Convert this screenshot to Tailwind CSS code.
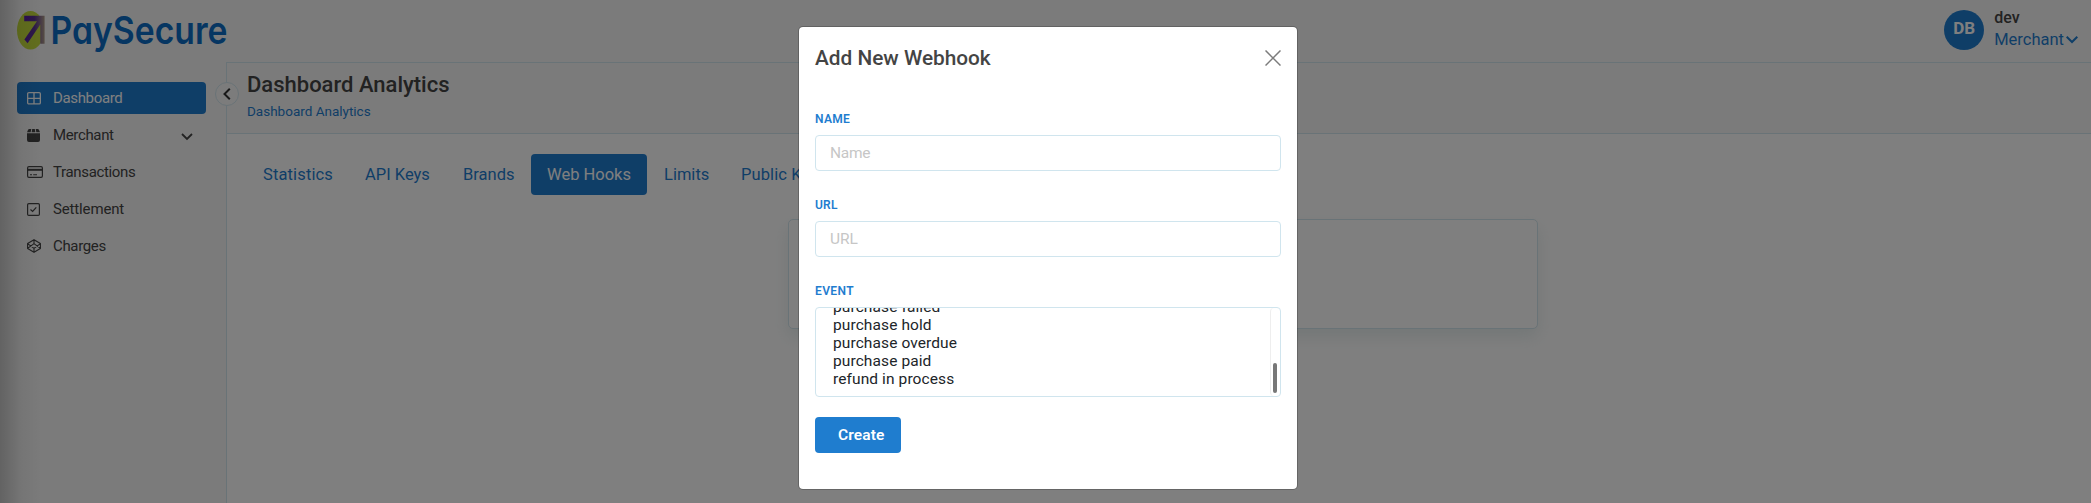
<!DOCTYPE html>
<html lang="en">
<head>
<meta charset="utf-8">
<title>PaySecure</title>
<script src="https://cdn.jsdelivr.net/npm/@tailwindcss/browser@4"></script>
</head>
<body class="relative w-full h-[503px] overflow-hidden bg-white font-['Roboto',sans-serif] text-[#444]">
<div class="flex flex-col h-[503px]">
  <header class="flex shrink-0 h-[62px] bg-[#f7f7f7] justify-between">
    <svg class="ml-[17px] mt-[4px] overflow-visible" width="220" height="54" viewBox="17 4 220 54">
      <defs>
        <linearGradient id="stem" gradientUnits="userSpaceOnUse" x1="24" y1="0" x2="45" y2="0"><stop offset="0" stop-color="#5a1ea8"/><stop offset=".5" stop-color="#5a3490"/><stop offset="1" stop-color="#b0a088"/></linearGradient>
      </defs>
      <ellipse cx="30.500" cy="30.300" rx="13.500" ry="19.300" fill="#c4dc3c"/>
      <path d="M24.200 15.800H44.600V43.800H40.300V24.500L27.600 43.300L24.400 39.600L37 21.300H24.200Z" fill="url(#stem)"/>
      <text class="[font-feature-settings:'cv11']" x="50.500" y="44.200" font-family="Inter, sans-serif" font-size="38.500" font-weight="600" fill="#0c6cc4" textLength="177" lengthAdjust="spacingAndGlyphs">PaySecure</text>
    </svg>
    <div class="flex items-start mr-[13px] pt-[10px] gap-[10px]">
      <div class="size-10 rounded-full bg-[#1f7dcf] text-white text-[17px] font-bold flex items-center justify-center pb-[2px]">DB</div>
      <div class="text-[16.5px] leading-[22px] -mt-[3px]">
        <div class="font-medium text-[16px]">dev</div>
        <div class="flex items-center text-[#1f7dcf]">Merchant<svg class="ml-[2px]" width="12" height="8" viewBox="0 0 12 8" fill="none" stroke="currentColor" stroke-width="2"><path d="M.7 .8 6 6 11.300 .8"/></svg></div>
      </div>
    </div>
  </header>
  <div class="flex flex-1">
    <aside class="w-[226px] shrink-0 bg-[#f7f7f7] pl-[17px] pr-[20px] pt-[20px] flex flex-col gap-[5px] text-[15px] tracking-[-0.35px]">
      <a class="flex items-center h-8 rounded bg-[#1f7dcf] text-white pl-[10px]">
        <span class="w-[26px]"><svg width="14" height="13" viewBox="0 0 14 13" fill="none" stroke="currentColor" stroke-width="1.300"><rect x=".65" y=".65" width="12.700" height="11.200" rx="1.200"/><path d="M7 .6V12M.6 6.300H13.400"/></svg></span>Dashboard</a>
      <a class="flex items-center h-8 pl-[10px]">
        <span class="w-[26px]"><svg width="13" height="13" viewBox="0 0 13 13" fill="currentColor"><path d="M2.200 0H4.300L3.700 3.300H0L1 .9Q1.400 0 2.200 0ZM5.200 0H7.800L8.400 3.300H4.600ZM8.700 0H10.800Q11.600 0 12 .9L13 3.300H9.300ZM0 4.200H13V11Q13 13 11 13H2Q0 13 0 11Z"/></svg></span>Merchant
        <svg class="ml-auto mr-[13px] mt-[3px]" width="12" height="8" viewBox="0 0 12 8" fill="none" stroke="currentColor" stroke-width="1.800"><path d="M1 1 6 6 11 1"/></svg></a>
      <a class="flex items-center h-8 pl-[10px]">
        <span class="w-[26px]"><svg width="16" height="12" viewBox="0 0 16 12" fill="none" stroke="currentColor"><rect x=".6" y=".6" width="14.800" height="10.800" rx="1.300" stroke-width="1.200"/><path d="M.6 3.800H15.400" stroke-width="2"/><path d="M3 8.700H5M6.200 8.700H10" stroke-width="1.100"/></svg></span>Transactions</a>
      <a class="flex items-center h-8 pl-[10px]">
        <span class="w-[26px]"><svg width="13" height="13" viewBox="0 0 13 13" fill="none" stroke="currentColor" stroke-width="1.200"><rect x=".6" y=".6" width="11.800" height="11.800" rx="1.200"/><path d="M3.500 6.500 5.600 8.500 9.300 4.300"/></svg></span><span class="tracking-[-0.15px]">Settlement</span></a>
      <a class="flex items-center h-8 pl-[10px]">
        <span class="w-[26px]"><svg width="14" height="14" viewBox="0 0 14 14" fill="none" stroke="currentColor" stroke-width="1.150" stroke-linejoin="round"><path d="M7 .7 13.400 4.600V9.400L7 13.300 .6 9.400V4.600ZM7 .7V4.600M7 9.400V13.300M.6 4.600 7 9.400 13.400 4.600M.6 9.400 7 4.600 13.400 9.400"/></svg></span>Charges</a>
    </aside>
    <main class="relative flex-1 border-l border-t border-[#d3e6ee] flex flex-col">
      <div class="absolute -left-[12px] top-[19px] size-6 rounded-full border border-[#d3e6ee] bg-[#f9f9f9] flex items-center justify-center">
        <svg width="8" height="12" viewBox="0 0 8 12" fill="none" stroke="#333" stroke-width="2"><path d="M6.800 .8 1.500 6 6.800 11.200"/></svg>
      </div>
      <div class="h-[71px] bg-[#f7f7f7] border-b border-[#d3e6ee] pl-[20px] pt-[8px]">
        <h1 class="text-[22px] leading-[28px] font-medium">Dashboard Analytics</h1>
        <div class="text-[13.5px] leading-[18px] mt-[3px] text-[#1f7dcf]">Dashboard Analytics</div>
      </div>
      <nav class="flex pl-[19px] pt-[20px] text-[16.5px] leading-[41px] text-[#1f7dcf] whitespace-nowrap">
        <a class="w-[102px] pl-[17px] tracking-[0.13px]">Statistics</a>
        <a class="w-[98px] pl-[17px]">API Keys</a>
        <a class="w-[85px] pl-[17px]">Brands</a>
        <a class="w-[116px] text-center rounded bg-[#1f7dcf] text-white">Web Hooks</a>
        <a class="w-[77px] pl-[17px]">Limits</a>
        <a class="pl-[17px] tracking-[0.1px]">Public Keys</a>
      </nav>
      <div class="ml-[561px] mt-[24px] w-[750px] h-[110px] rounded-[5px] border border-[#d3e6ee] bg-white shadow-[0_8px_16px_rgba(160,190,190,0.25)]"></div>
    </main>
  </div>
</div>

<div class="absolute inset-0 bg-black/50 flex items-start pt-[26px] pl-[798px]">
  <div class="absolute left-0 top-0 w-[42px] h-full bg-linear-to-r from-black/20 via-black/5 to-transparent"></div>
  <section class="w-[500px] h-[464px] rounded-[5px] border border-black/20 bg-clip-padding bg-white px-[16px] flex flex-col items-stretch">
    <div class="flex items-center justify-between h-[62px]">
      <h2 class="text-[20.8px] font-medium pt-[2px]">Add New Webhook</h2>
      <svg width="16" height="16" viewBox="0 0 16 16" fill="none" stroke="#7c7c7c" stroke-width="1.500"><path d="M.5 .5 15.500 15.500M15.500 .5 .5 15.500"/></svg>
    </div>
    <label class="mt-[21px] text-[12px] leading-[18px] font-semibold tracking-[0.3px] text-[#1f7dcf]">NAME</label>
    <input class="mt-[7px] h-9 w-full rounded border border-[#d0e5ee] px-[14px] text-[15.5px] tracking-[-0.3px] placeholder:text-[#c6c6c6]" placeholder="Name">
    <label class="mt-[25px] text-[12px] leading-[18px] font-semibold tracking-[0.2px] text-[#1f7dcf]">URL</label>
    <input class="mt-[7px] h-9 w-full rounded border border-[#d0e5ee] px-[14px] text-[15.5px] placeholder:text-[#c6c6c6]" placeholder="URL">
    <label class="mt-[25px] text-[12px] leading-[18px] font-semibold tracking-[0.4px] text-[#1f7dcf]">EVENT</label>
    <div class="mt-[7px] h-[90px] shrink-0 w-full rounded border border-[#d0e5ee] overflow-hidden flex justify-between">
      <div class="flex flex-col justify-end pl-[17px] pb-[8px] text-[15.5px] leading-[18px] tracking-[0.1px] text-[#212529]">
        <div>purchase failed</div><div>purchase hold</div><div>purchase overdue</div><div>purchase paid</div><div>refund in process</div>
      </div>
      <div class="w-[10px] rounded border-l border-[#eee] flex items-end justify-center pb-[3px] pr-[1px]"><div class="w-1 h-[30px] rounded-full bg-[#777]"></div></div>
    </div>
    <button class="mt-[20px] w-[86px] h-9 rounded bg-[#1f7dcf] text-white text-[15.5px] font-semibold tracking-[0.1px] pl-[23px] pt-[2px] text-left">Create</button>
  </section>
</div>
</body>
</html>
